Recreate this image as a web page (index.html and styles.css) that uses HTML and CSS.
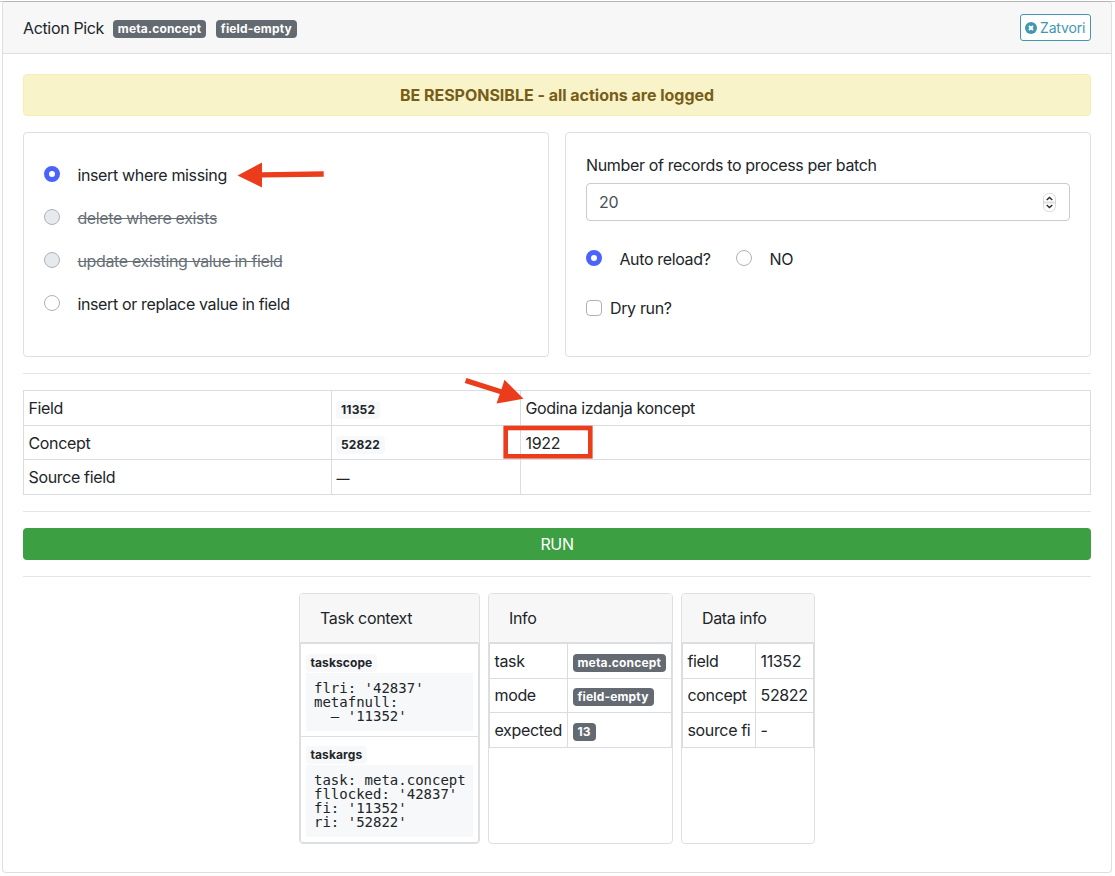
FILE: index.html
```
<!DOCTYPE html>
<html lang="hr">
<head>
    <meta charset="UTF-8">
    <meta name="viewport" content="width=device-width, initial-scale=1.0">
    <title>Action Pick</title>
    <link rel="stylesheet" href="styles.css">
</head>
<body>
    <div class="card page-card">
        <div class="card-header main-header">
            <div class="title">
                <span class="t-title">Action Pick</span>
                <span class="badge">meta.concept</span>
                <span class="badge">field-empty</span>
            </div>
            <button type="button" class="btn-close">
                <svg width="12" height="12" viewBox="0 0 12 12">
                    <circle cx="6" cy="6" r="6" fill="currentColor"/>
                    <path d="M4 4l4 4M8 4l-4 4" stroke="#fff" stroke-width="1.9"/>
                </svg>
                <span>Zatvori</span>
            </button>
        </div>
        <div class="card-body">
            <div class="alert"><span>BE RESPONSIBLE - all actions are logged</span></div>

            <form class="options">
                <div class="card panel actions">
                    <label class="choice"><input type="radio" name="action" checked><span>insert where missing</span></label>
                    <label class="choice"><input type="radio" name="action" disabled><del>delete where exists</del></label>
                    <label class="choice"><input type="radio" name="action" disabled><del>update existing value in field</del></label>
                    <label class="choice"><input type="radio" name="action"><span>insert or replace value in field</span></label>
                </div>
                <div class="card panel batch">
                    <label class="batch-label" for="batch"><span>Number of records to process per batch</span></label>
                    <div class="number">
                        <input type="text" id="batch" name="batch" value="20">
                        <svg class="spinner" width="13" height="19" viewBox="0 0 13 19">
                            <rect x=".5" y=".5" width="12" height="18" rx="5" fill="#fff" stroke="#d9d9db"/>
                            <path d="M1 9.5h11" stroke="#dededf" stroke-width="2"/>
                            <path d="M3.7 7l2.8-2.6L9.3 7M3.7 12l2.8 2.6L9.3 12" fill="none" stroke="#2b2b2b" stroke-width="1.4"/>
                        </svg>
                    </div>
                    <div class="reload">
                        <label class="choice"><input type="radio" name="reload" checked><span>Auto reload?</span></label>
                        <label class="choice"><input type="radio" name="reload"><span>NO</span></label>
                    </div>
                    <label class="choice check"><input type="checkbox" name="dry"><span>Dry run?</span></label>
                </div>
            </form>

            <hr>
            <table class="table fields">
                <tr><td class="c-name">Field</td><td class="c-id"><span class="badge light">11352</span></td><td>Godina izdanja koncept</td></tr>
                <tr><td>Concept</td><td><span class="badge light">52822</span></td><td>1922</td></tr>
                <tr><td>Source field</td><td><span class="none">—</span></td><td></td></tr>
            </table>
            <hr>
            <button type="button" class="btn-run">RUN</button>
            <hr>

            <div class="info-cards">
                <div class="card context">
                    <div class="card-header">Task context</div>
                    <div class="context-body">
                        <div class="context-row">
                            <span class="badge light">taskscope</span>
                            <pre>flri: '42837'
metafnull:
  – '11352'</pre>
                        </div>
                        <div class="context-row">
                            <span class="badge light">taskargs</span>
                            <pre>task: meta.concept
fllocked: '42837'
fi: '11352'
ri: '52822'</pre>
                        </div>
                    </div>
                </div>
                <div class="card info">
                    <div class="card-header">Info</div>
                    <table class="table">
                        <tr><td class="c-key">task</td><td><span class="badge">meta.concept</span></td></tr>
                        <tr><td>mode</td><td><span class="badge">field-empty</span></td></tr>
                        <tr><td>expected</td><td><span class="badge">13</span></td></tr>
                    </table>
                </div>
                <div class="card data-info">
                    <div class="card-header">Data info</div>
                    <table class="table">
                        <tr><td class="c-key">field</td><td>11352</td></tr>
                        <tr><td>concept</td><td>52822</td></tr>
                        <tr><td>source fi</td><td>-</td></tr>
                    </table>
                </div>
            </div>
        </div>
    </div>

    <!-- annotations drawn over the form -->
    <svg class="marks" width="1115" height="876" viewBox="0 0 1115 876">
        <path d="M237.5 175.5L262 162.5V172.2L323.7 171.3V176.8L262 177.6V187.5Z"/>
        <path d="M466.5 378L501.5 389.3L504.5 379.8L523.5 398.8L496.5 403.5L499.8 394L464.7 383Z"/>
        <rect x="505.7" y="428" width="84.6" height="28.3" class="frame"/>
    </svg>
</body>
</html>
```
FILE: styles.css
```
* {
    box-sizing: border-box;
}

body {
    margin: 0;
    padding: 1px 3px 3px 2px;
    font-family: Inter, "Liberation Sans", sans-serif;
    font-size: 16px;
    line-height: 24px;
    letter-spacing: -0.35px;
    color: #212529;
    background: linear-gradient(#fff 1px, #c8c8c8 1px, #c8c8c8 2px, #fff 2px) no-repeat;
}

.card {
    border: 1px solid #dfdfdf;
    border-radius: 4px;
    background-color: #fff;
}

.page-card {
    height: 872px;
    border-top-color: #b4b6b6;
}

.card-header {
    padding: 12px 20px;
    height: 49px;
    background-color: #f7f7f7;
    border-bottom: 1px solid #dfdfdf;
    border-radius: 3px 3px 0 0;
}

.main-header {
    display: flex;
    justify-content: space-between;
    align-items: center;
    height: 52px;
}

.title {
    display: flex;
    align-items: center;
    gap: 9.5px;
}

.t-title {
    margin-right: -0.7px;
}

.badge {
    display: inline-block;
    padding: 3px 5px;
    height: 18px;
    border-radius: 4px;
    font-size: 12px;
    line-height: 12px;
    font-weight: 700;
    letter-spacing: 0.16px;
    color: #fff;
    background-color: #636a72;
}

.title .badge {
    margin-top: 3px;
}

.badge.light {
    color: #212529;
    background-color: #f7f8fa;
}

.btn-close {
    display: flex;
    align-items: center;
    gap: 3.5px;
    width: 71px;
    height: 27px;
    padding: 0 4px;
    border: 1px solid #4197b0;
    border-radius: 3px;
    color: #4197b0;
    background: #fff;
    font: inherit;
    font-size: 14px;
    letter-spacing: -0.15px;
}

.btn-close svg {
    flex: none;
    margin-left: -0.5px;
}

.card-body {
    padding: 20px;
}

.alert {
    height: 42px;
    padding: 8px;
    margin-bottom: 16px;
    border: 1px solid #f7eeb5;
    border-radius: 4px;
    background-color: #f9f3ca;
    color: #765e18;
    font-weight: 700;
    letter-spacing: -0.02px;
    text-align: center;
}

.options {
    display: grid;
    grid-template-columns: 1fr 1fr;
    gap: 16px;
}

.panel {
    height: 225px;
    padding: 20px;
}

.choice {
    display: flex;
    align-items: center;
    gap: 17.4px;
}

.actions {
    display: flex;
    flex-direction: column;
    gap: 19px;
    padding-top: 30px;
}

.choice input {
    appearance: none;
    flex: none;
    width: 16px;
    height: 16px;
    margin: -2px 0 0;
    border: 1px solid #adb2bb;
    border-radius: 50%;
    background: #fff;
}

.choice input:checked {
    border: 5px solid #4a63fa;
}

.choice input:disabled {
    background: #e6eaed;
}

.choice del {
    color: #686f77;
}

.batch-label {
    display: block;
}

.number {
    display: flex;
    align-items: center;
    height: 38px;
    margin-top: 6px;
    padding: 0 13px 0 12px;
    border: 1px solid #c9cad4;
    border-radius: 4px;
}

.number input {
    flex: 1;
    padding: 0;
    border: 0;
    font: inherit;
    letter-spacing: inherit;
    color: #495057;
}

.reload {
    display: flex;
    gap: 25.5px;
    margin-top: 26px;
}

.choice.check {
    gap: 8px;
    margin-top: 25px;
}

.choice.check input {
    margin-top: 0;
    border-radius: 4px;
}

hr {
    height: 1px;
    margin: 16px 0;
    border: 0;
    background-color: #e5e5e5;
}

.table {
    width: 100%;
    border-collapse: collapse;
    table-layout: fixed;
}

.table td {
    height: 35px;
    padding: 0 4.5px;
    border: 1px solid #d9dce0;
    white-space: nowrap;
}

.table tr:nth-child(2) td {
    height: 34px;
}

.info-cards .table tr:nth-child(2) td {
    padding-bottom: 2px;
}

.table .badge {
    vertical-align: 0;
}

.fields .badge {
    margin-left: -0.5px;
}

.none {
    font-size: 13px;
    font-weight: 600;
}

.c-name {
    width: 308px;
}

.c-id {
    width: 189px;
}

.btn-run {
    display: block;
    width: 100%;
    height: 32px;
    border: 0;
    border-radius: 4px;
    color: #fff;
    background-color: #3c9f42;
    font: inherit;
    letter-spacing: inherit;
}

.info-cards {
    display: flex;
    justify-content: center;
    gap: 8px;
    height: 251px;
}

.context {
    width: 181px;
}

.info {
    width: 185px;
}

.data-info {
    width: 134px;
}

.info .c-key {
    width: 78px;
}

.data-info .c-key {
    width: 73px;
}

.context-body {
    height: 200px;
    border: 1px solid #dcdfe2;
    border-radius: 0 0 3px 3px;
}

.context-row {
    padding: 10px 5px 5px;
}

.context-row + .context-row {
    padding-top: 9px;
    border-top: 1px solid #dcdfe2;
}

.context .badge {
    display: table;
    height: 18px;
    padding: 3px 4.5px;
    letter-spacing: 0.1px;
}

.context pre {
    margin: 1px 0 0;
    padding: 8px;
    font: 14px/14px "DejaVu Sans Mono", monospace;
    letter-spacing: 0;
    background-color: #f7f8fa;
}

.marks {
    position: absolute;
    top: 0;
    left: 0;
    pointer-events: none;
    fill: #eb3c1c;
}

.marks .frame {
    fill: none;
    stroke: #eb3c1c;
    stroke-width: 4.6;
}
```
